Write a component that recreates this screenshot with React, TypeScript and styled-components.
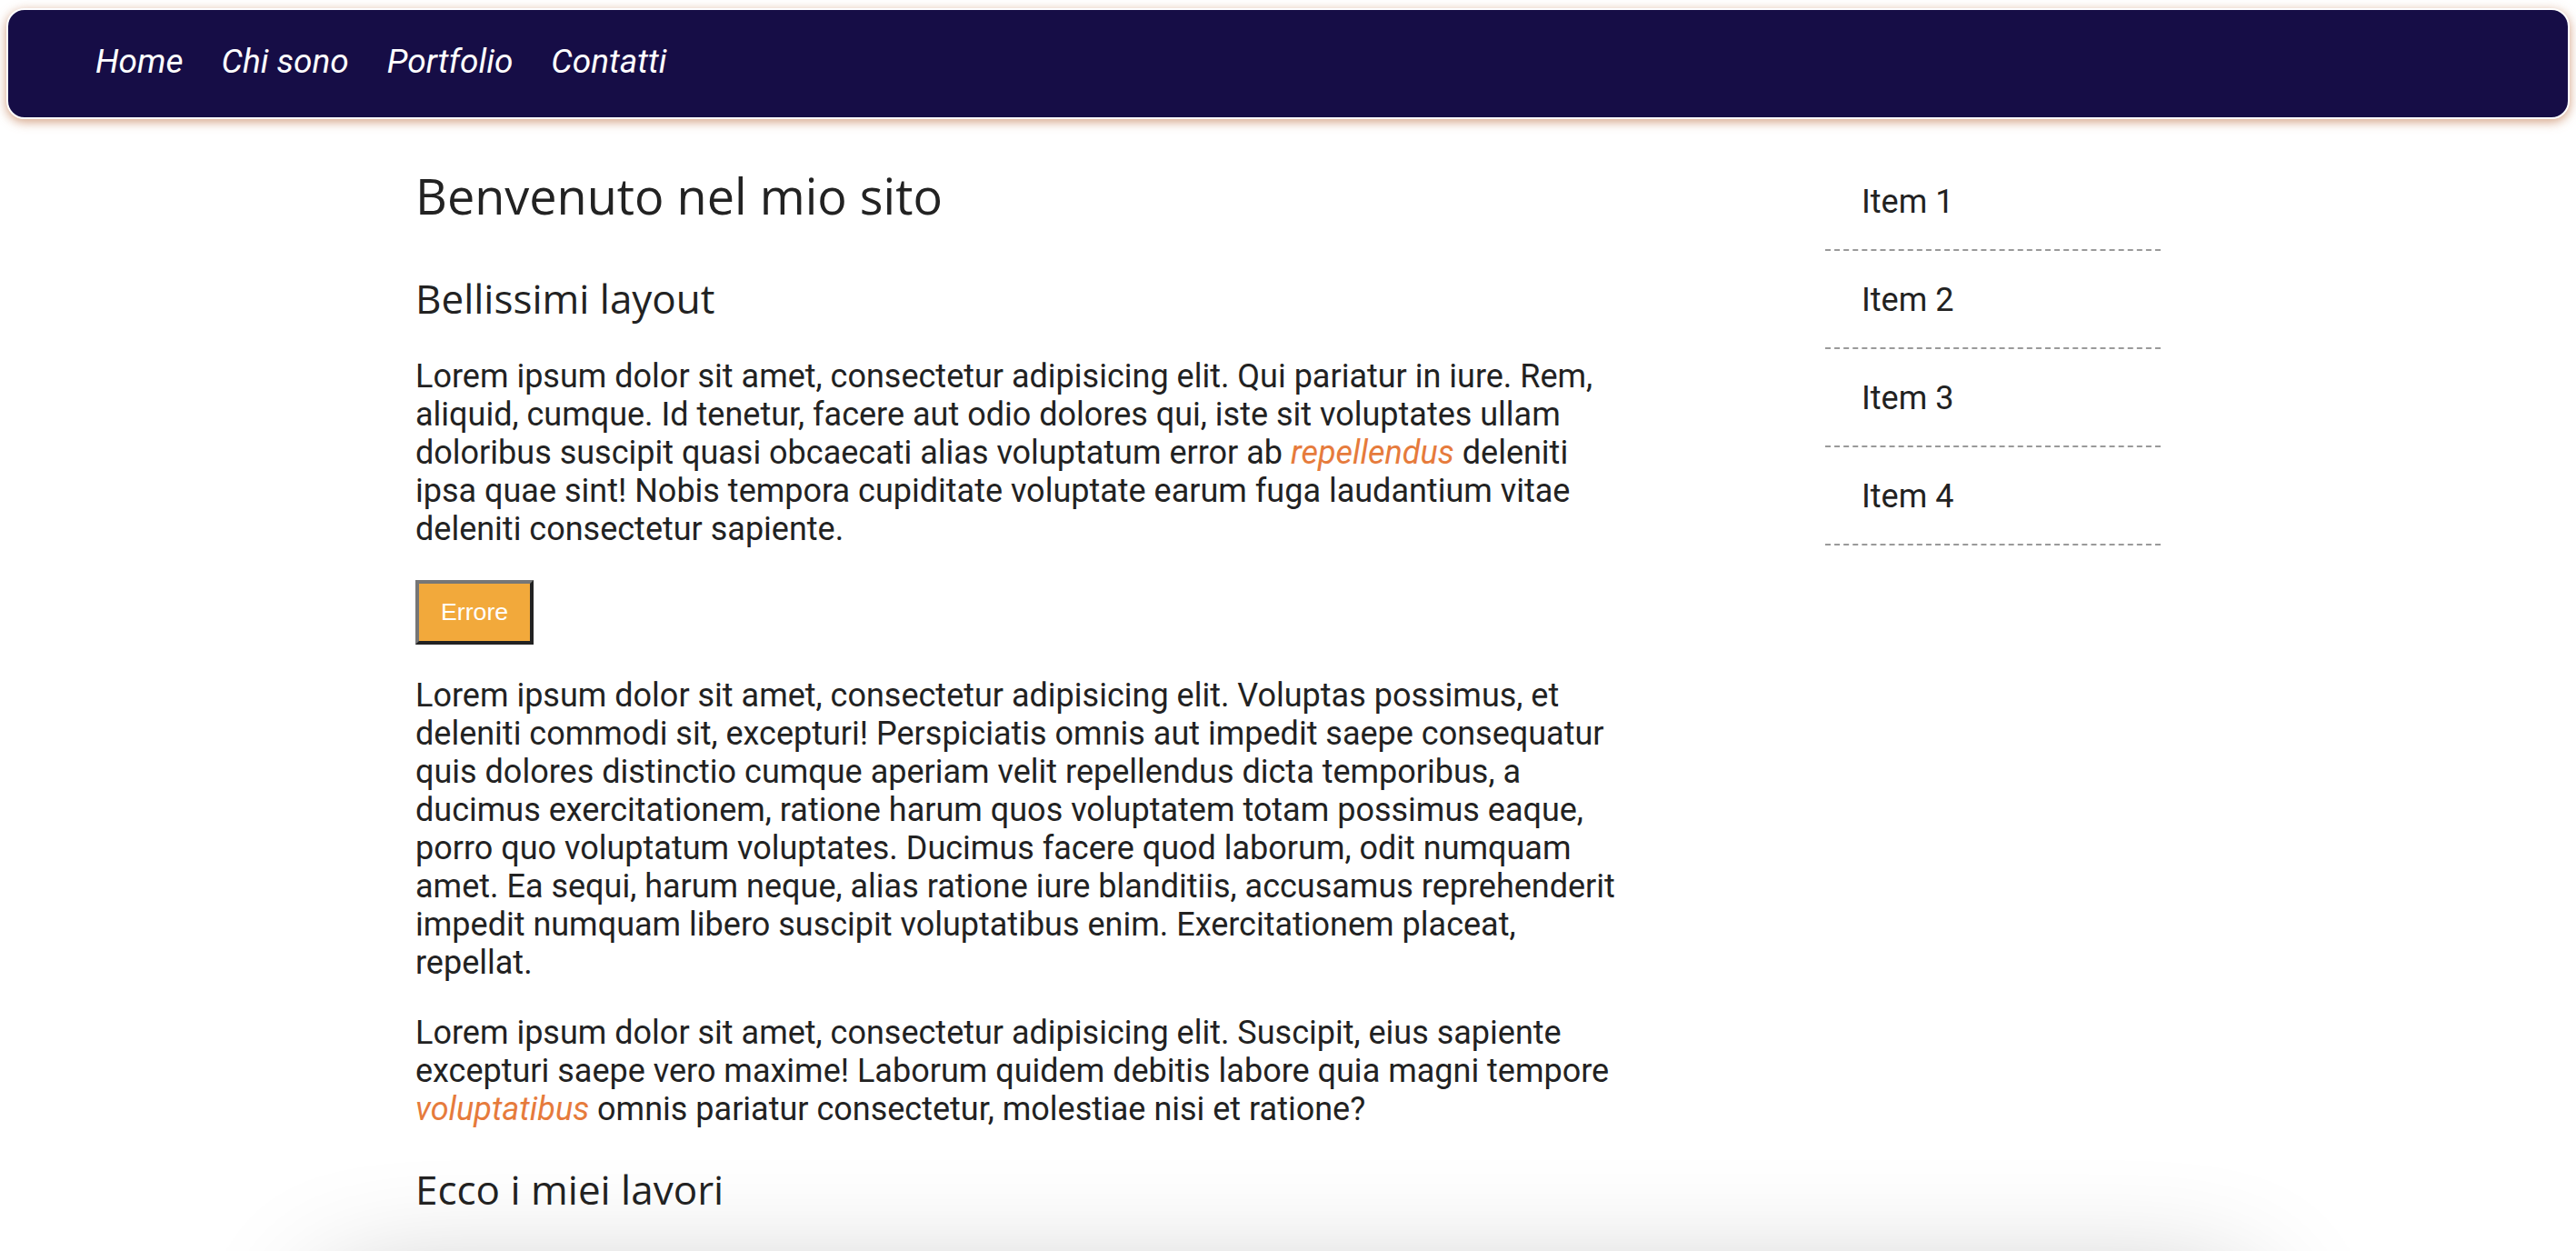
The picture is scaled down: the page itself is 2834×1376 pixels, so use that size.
import React from 'react';
import styled, { createGlobalStyle } from 'styled-components';

const GlobalStyle = createGlobalStyle`
  html, body {
    margin: 0;
    padding: 0;
    background: #ffffff;
  }

  body {
    font-family: Roboto, "Liberation Sans", Arial, sans-serif;
    color: #222222;
    overflow: hidden;
  }
`;

const Page = styled.div`
  width: 100%;
  min-height: 100vh;
`;

const NavBar = styled.nav`
  margin: 9px 7px 0;
  height: 118px;
  background-color: #160d46;
  border: 2px solid #ffffff;
  border-radius: 20px;
  box-shadow: 0 3px 12px rgba(196, 128, 88, 0.75);
  display: flex;
  align-items: center;
`;

const NavList = styled.ul`
  list-style: none;
  margin: 0;
  padding: 0 0 6px 96px;
  display: flex;
  gap: 42px;
`;

const NavLink = styled.a`
  font-family: Roboto, "Liberation Sans", Arial, sans-serif;
  font-style: italic;
  font-size: 37px;
  color: #ffffff;
  text-decoration: none;
  cursor: pointer;
`;

const Layout = styled.div`
  width: 1920px;
  margin: 36px auto 0;
  display: grid;
  grid-template-columns: 1344px 1fr;
  align-items: start;
`;

const Main = styled.main`
  min-width: 0;
`;

const Title = styled.h1`
  font-family: "Open Sans", "Noto Sans", sans-serif;
  font-weight: 400;
  font-size: 54px;
  line-height: normal;
  margin: 11px 0 46px;
  color: #222222;
`;

const SubTitle = styled.h2`
  font-family: "Open Sans", "Noto Sans", sans-serif;
  font-weight: 400;
  font-size: 44px;
  line-height: normal;
  margin: 37px 0 33px;
  color: #222222;
`;

const Paragraph = styled.p`
  font-size: 36px;
  line-height: 42px;
  margin: 35px 0;
`;

const Accent = styled.em`
  color: #e67b3c;
  font-style: italic;
`;

const ErrorButton = styled.button`
  font-family: "Liberation Sans", Arial, sans-serif;
  font-size: 26.7px;
  color: #ffffff;
  background-color: #f2a93b;
  border: 4px solid;
  border-color: #767676 #222222 #222222 #767676;
  padding: 16px 24px;
  line-height: normal;
  cursor: pointer;
`;

const Aside = styled.aside`
  justify-self: end;
  width: 369px;
  margin-top: 1px;
`;

const SideList = styled.ul`
  list-style: none;
  margin: 0;
  padding: 0;
`;

const SideItem = styled.li`
  font-size: 36px;
  line-height: normal;
  padding: 33px 40px 31px;
  border-bottom: 2px dashed #9a9a9a;
`;

const Gallery = styled.section`
  width: 2110px;
  height: 600px;
  margin: 52px auto 0;
  background: #ffffff;
  border-radius: 30px;
  box-shadow: 0 0 140px rgba(0, 0, 0, 0.3);
`;

const navItems = ['Home', 'Chi sono', 'Portfolio', 'Contatti'];
const sideItems = ['Item 1', 'Item 2', 'Item 3', 'Item 4'];

function App() {
  return (
    <Page>
      <GlobalStyle />
      <NavBar>
        <NavList>
          {navItems.map((item) => (
            <li key={item}>
              <NavLink>{item}</NavLink>
            </li>
          ))}
        </NavList>
      </NavBar>
      <Layout>
        <Main>
          <Title>Benvenuto nel mio sito</Title>
          <SubTitle>Bellissimi layout</SubTitle>
          <Paragraph>
            Lorem ipsum dolor sit amet, consectetur adipisicing elit. Qui
            pariatur in iure. Rem, aliquid, cumque. Id tenetur, facere aut odio
            dolores qui, iste sit voluptates ullam doloribus suscipit quasi
            obcaecati alias voluptatum error ab <Accent>repellendus</Accent>{' '}
            deleniti ipsa quae sint! Nobis tempora cupiditate voluptate earum
            fuga laudantium vitae deleniti consectetur sapiente.
          </Paragraph>
          <ErrorButton>Errore</ErrorButton>
          <Paragraph>
            Lorem ipsum dolor sit amet, consectetur adipisicing elit. Voluptas
            possimus, et deleniti commodi sit, excepturi! Perspiciatis omnis aut
            impedit saepe consequatur quis dolores distinctio cumque aperiam
            velit repellendus dicta temporibus, a ducimus exercitationem,
            ratione harum quos voluptatem totam possimus eaque, porro quo
            voluptatum voluptates. Ducimus facere quod laborum, odit numquam
            amet. Ea sequi, harum neque, alias ratione iure blanditiis,
            accusamus reprehenderit impedit numquam libero suscipit voluptatibus
            enim. Exercitationem placeat, repellat.
          </Paragraph>
          <Paragraph>
            Lorem ipsum dolor sit amet, consectetur adipisicing elit. Suscipit,
            eius sapiente excepturi saepe vero maxime! Laborum quidem debitis
            labore quia magni tempore <Accent>voluptatibus</Accent> omnis
            pariatur consectetur, molestiae nisi et ratione?
          </Paragraph>
          <SubTitle>Ecco i miei lavori</SubTitle>
        </Main>
        <Aside>
          <SideList>
            {sideItems.map((item) => (
              <SideItem key={item}>{item}</SideItem>
            ))}
          </SideList>
        </Aside>
      </Layout>
      <Gallery />
    </Page>
  );
}

export default App;
